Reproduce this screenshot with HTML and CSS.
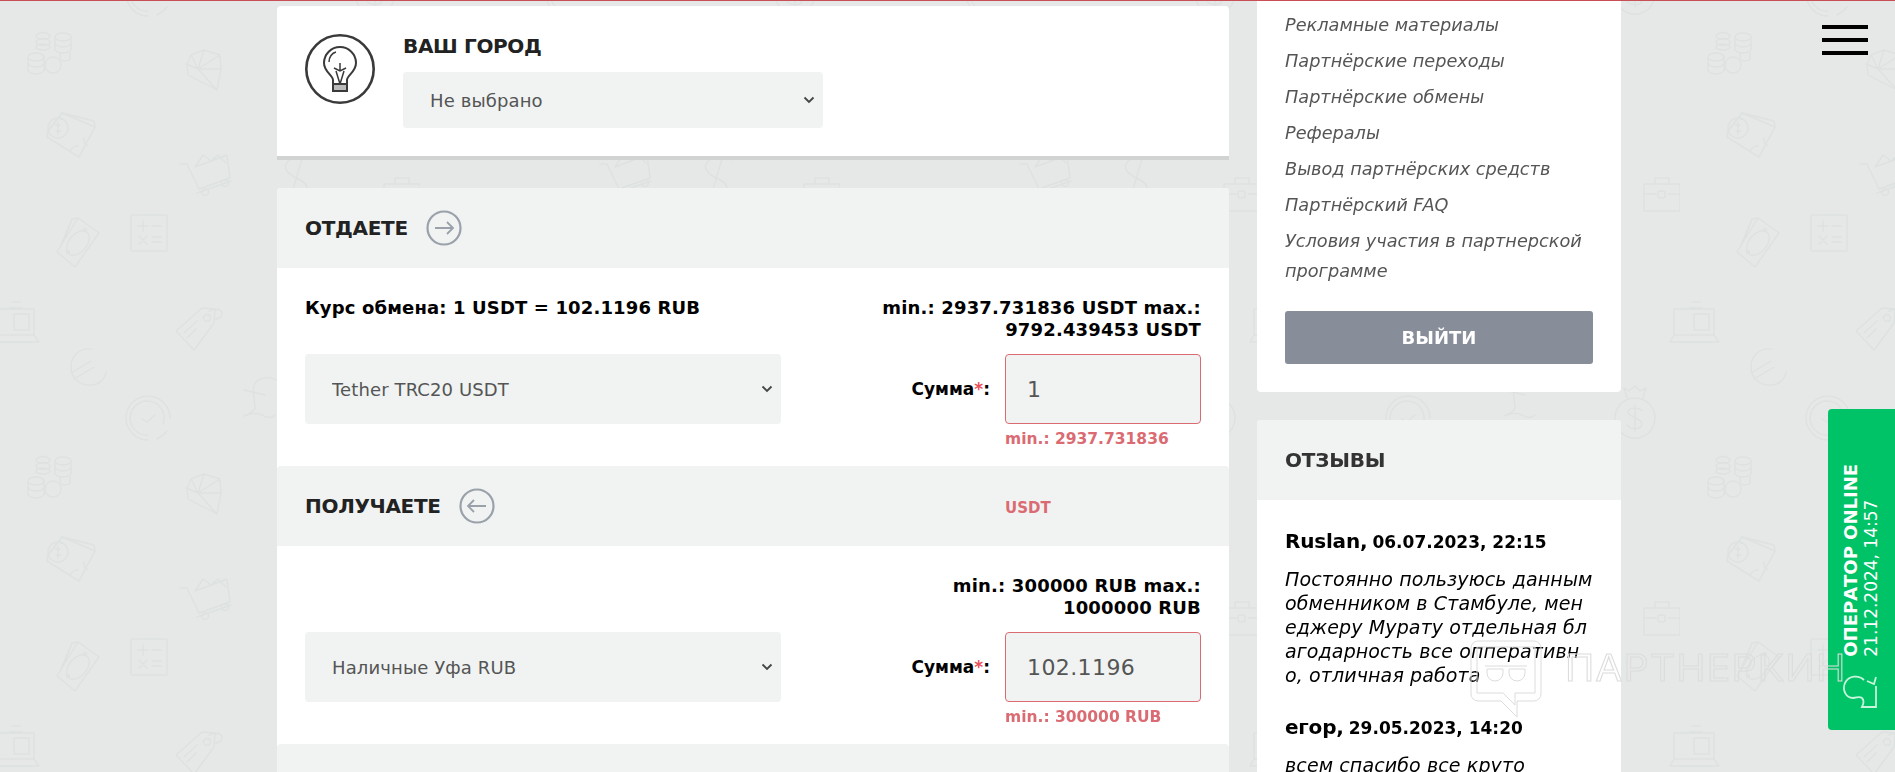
FILE: index.html
```html
<!DOCTYPE html>
<html lang="ru">
<head>
<meta charset="utf-8">
<title>Обмен</title>
<link rel="stylesheet" href="styles.css">
</head>
<body>
<svg class="pattern-bg" xmlns="http://www.w3.org/2000/svg" aria-hidden="true">
  <defs>
    <g id="coins">
      <ellipse cx="43" cy="36" rx="7" ry="3.5"/><ellipse cx="43" cy="42" rx="7" ry="3.5"/><ellipse cx="43" cy="47" rx="7" ry="3"/>
      <ellipse cx="63" cy="37" rx="8" ry="4"/><path d="M55 37v6c0 2 3 4 8 4s8-2 8-4v-6M55 43v6c0 2 3 4 8 4s8-2 8-4v-6M60 53v6c1 2 7 3 10 0v-6"/>
      <ellipse cx="36" cy="57" rx="8" ry="4"/><path d="M28 57v6c0 2 3 4 8 4s8-2 8-4v-6M28 63v7c0 2 3 4 8 4s8-2 8-4v-7"/>
      <circle cx="53" cy="65" r="8"/>
    </g>
    <g id="diamond">
      <path d="M191 55l13-5 16 5 1 14-4 21-29-15-1-11zM191 55l7 14 22-14M204 50l-6 19M186 64l12 5 23 0M198 69l19 21"/>
    </g>
    <g id="bill">
      <path d="M62 113l32 8 1 6-16 30-32-20 1-6z"/><path d="M48 131l14-18 33 14-16 30-32-20z"/><circle cx="58" cy="128" r="10"/>
      <path d="M58 122v12M55 125h5M56 131h5M84 138a8 8 0 0 0 4 8M70 152a8 8 0 0 1 8-6"/>
    </g>
    <g id="cart">
      <path d="M180 164h7l12 25 31-11-3-23-32 12M195 167l8-12 8 6 7-6 8 8M197 193l34-12"/><circle cx="205" cy="192" r="3.5"/><circle cx="225" cy="183" r="3.5"/>
    </g>
    <g id="dollar">
      <path d="M312 160c-8-5-22-4-26 4-3 7 6 12 12 15 7 3 12 8 7 13-6 5-15 4-21-2M304 152l-14 48"/>
    </g>
    <g id="briefcase">
      <rect x="384" y="184" width="36" height="27" rx="1"/><path d="M395 184v-6h14v6M384 194h12M408 194h12"/><rect x="398" y="191" width="7" height="7" rx="2"/>
    </g>
    <g id="stack">
      <path d="M57 252l21-34 21 15-24 34zM60 247l12-28 6-1M64 240l8-21 6-1"/><ellipse cx="78" cy="243" rx="14" ry="9" transform="rotate(-50 78 243)"/><circle cx="85" cy="230" r="1.5"/><circle cx="68" cy="252" r="1.5"/>
    </g>
    <g id="calc">
      <rect x="131" y="215" width="36" height="36" rx="1"/><path d="M138 226h10M143 221v10M152 226h9M139 236l8 8M147 236l-8 8M152 237h9M152 242h9"/>
    </g>
    <g id="laptop">
      <path d="M-6 335v-26h40v26M-10 342l4-7h40l5 7zM10 308h12M12 302h8"/><rect x="14" y="314" width="15" height="16"/>
    </g>
    <g id="tag">
      <path d="M176 331l26-23 13 1-1 14-20 27zM184 333l13-12M187 338l9-9"/><circle cx="207" cy="318" r="3.5"/><path d="M209 311c4-3 11-2 13 1 1 4-2 7-7 7"/>
    </g>
    <g id="euro">
      <path d="M91 349c-12-1-20 7-20 18 0 11 9 19 20 18 8 0 14-6 15-13M71 373l20-12M74 379l20-12"/>
    </g>
    <g id="clock">
      <path d="M148 440c-12 0-22-10-22-22s10-22 22-22 22 10 22 22M167 431c-3 4-6 6-10 8"/><path d="M148 435a17 17 0 1 1 15-11"/><path d="M142 419l5 3 8-7"/>
    </g>
    <g id="pound">
      <path d="M276 380c-8-5-20-2-22 6-2 5 1 14 1 22-1 3-6 6-11 8 6-2 12-4 18-1 5 3 10 3 13 0M244 390l21 5"/>
    </g>
    <g id="moneybag">
      <circle cx="375" cy="418" r="20"/><path d="M367 398l-3-10 5 3 6-5 5 5 6-3-3 10M382 411c-3-4-13-4-14 1s14 6 14 12-12 6-15 1M375 405v26"/>
    </g>
    <pattern id="tile" width="420" height="424" patternUnits="userSpaceOnUse">
      <g class="pattern-icons">
        <use href="#coins"/><use href="#diamond"/><use href="#bill"/><use href="#cart"/><use href="#dollar"/>
        <use href="#briefcase"/><use href="#stack"/><use href="#calc"/><use href="#laptop"/><use href="#laptop" x="420"/>
        <use href="#tag"/><use href="#euro"/><use href="#clock"/><use href="#clock" y="-424"/><use href="#pound"/>
        <use href="#moneybag"/><use href="#moneybag" y="-424"/>
      </g>
    </pattern>
  </defs>
  <rect width="100%" height="100%" fill="url(#tile)"/>
</svg>

<div class="page">
  <main class="main-col">
    <section class="city-card">
      <svg class="bulb" viewBox="0 0 70 70" fill="none" stroke="#3a3a3a" aria-hidden="true">
        <circle cx="35" cy="35" r="33.7" stroke-width="2.6"/>
        <path stroke-width="2" d="M28 50v-4c0-5-9-8-9-17a16 16 0 0 1 32 0c0 9-9 12-9 17v4z"/>
        <path stroke-width="1.5" d="M24 28c0-5 3-9 7-10M35 29v7M29 34l6 3 6-3M31 37l4 13M39 37l-4 13"/>
        <path stroke-width="2" fill="#bbb" d="M28 50h14v7H28z"/>
      </svg>
      <div class="city-fields">
        <h2 class="city-title">ВАШ ГОРОД</h2>
        <select class="field-select city-select"><option>Не выбрано</option></select>
      </div>
    </section>

    <section class="exchange-card">
      <header class="section-head">
        <h2 class="section-title">ОТДАЕТЕ</h2>
        <svg class="dir-icon" viewBox="0 0 36 36" fill="none" stroke="#9aa1aa" aria-hidden="true"><circle cx="18" cy="18" r="16.5" stroke-width="2.2"/><path stroke-width="1.8" d="M9 18h18M21 12l6 6-6 6"/></svg>
      </header>
      <div class="section-body">
        <div class="rate-row">
          <div class="rate-text">Курс обмена: 1 USDT = 102.1196 RUB</div>
          <div class="limits">min.: 2937.731836 USDT max.: 9792.439453 USDT</div>
        </div>
        <div class="form-row">
          <select class="field-select"><option>Tether TRC20 USDT</option></select>
          <label class="sum-label">Сумма<span class="req">*</span>:</label>
          <input class="sum-input" type="text" value="1">
          <div class="field-error">min.: 2937.731836</div>
        </div>
      </div>

      <header class="section-head">
        <h2 class="section-title">ПОЛУЧАЕТЕ</h2>
        <svg class="dir-icon" viewBox="0 0 36 36" fill="none" stroke="#9aa1aa" aria-hidden="true"><circle cx="18" cy="18" r="16.5" stroke-width="2.2"/><path stroke-width="1.8" d="M27 18H9M15 12l-6 6 6 6"/></svg>
        <div class="head-note">USDT</div>
      </header>
      <div class="section-body">
        <div class="rate-row">
          <div class="rate-text"></div>
          <div class="limits">min.: 300000 RUB max.: 1000000 RUB</div>
        </div>
        <div class="form-row">
          <select class="field-select"><option>Наличные Уфа RUB</option></select>
          <label class="sum-label">Сумма<span class="req">*</span>:</label>
          <input class="sum-input" type="text" value="102.1196">
          <div class="field-error">min.: 300000 RUB</div>
        </div>
      </div>
      <header class="section-head"></header>
    </section>
  </main>

  <aside class="side-col">
    <nav class="side-card menu-card">
      <a class="menu-link">Рекламные материалы</a>
      <a class="menu-link">Партнёрские переходы</a>
      <a class="menu-link">Партнёрские обмены</a>
      <a class="menu-link">Рефералы</a>
      <a class="menu-link">Вывод партнёрских средств</a>
      <a class="menu-link">Партнёрский FAQ</a>
      <a class="menu-link">Условия участия в партнерской программе</a>
      <button class="logout" type="button">ВЫЙТИ</button>
    </nav>
    <section class="side-card reviews-card">
      <header class="reviews-head">ОТЗЫВЫ</header>
      <div class="reviews-body">
        <article class="review">
          <div class="review-meta"><b class="review-name">Ruslan,</b> <span class="review-date">06.07.2023, 22:15</span></div>
          <p class="review-text">Постоянно пользуюсь данным обменником в Стамбуле, менеджеру Мурату отдельная благодарность все опперативно, отличная работа</p>
        </article>
        <article class="review">
          <div class="review-meta"><b class="review-name">егор,</b> <span class="review-date">29.05.2023, 14:20</span></div>
          <p class="review-text">всем спасибо все круто</p>
        </article>
      </div>
    </section>
  </aside>
</div>

<div class="top-line"></div>
<div class="burger"><span></span><span></span><span></span></div>

<div class="watermark">
  <svg class="wm-icon" viewBox="0 0 72 78" fill="none" stroke="#dcdcdc" aria-hidden="true">
    <path d="M8 1h56a7 7 0 0 1 7 7v46a7 7 0 0 1-7 7H47v16L31 61H8a7 7 0 0 1-7-7V8a7 7 0 0 1 7-7z"/>
    <path d="M7 7h58v46H45v12L33 53H7z"/>
    <path d="M17 29h16v4a8 8 0 0 1-16 0zM39 29h16v4a8 8 0 0 1-16 0zM15 26h42"/>
  </svg>
  <span class="wm-text">ПАРТНЕРКИН</span>
</div>

<aside class="operator">
  <div class="operator-text">
    <div class="operator-title">ОПЕРАТОР ONLINE</div>
    <div class="operator-date">21.12.2024, 14:57</div>
  </div>
  <svg class="operator-icon" viewBox="0 0 34 34" fill="none" stroke="#c8f5dc" stroke-width="1.8" aria-hidden="true">
    <path d="M21 6C16 1 6 1 2 9c-3 7 1 15 8 15 4 0 6-2 9 0 3 3 1 7 0 9h14V12M24 7l7 3 2-7"/>
  </svg>
</aside>
</body>
</html>
```
FILE: styles.css
```css
* { box-sizing: border-box; }
html { background: #e5e8e7; }
html, body {
  margin: 0;
  height: 772px;
  overflow: hidden;
  font-family: "DejaVu Sans", Verdana, sans-serif;
  color: #000;
}
.pattern-bg { position: fixed; inset: 0; width: 100%; height: 100%; z-index: -1; }
.pattern-icons { fill: none; stroke: #dde1e0; stroke-width: 1.4; stroke-linejoin: round; stroke-linecap: round; }

.page { display: flex; align-items: flex-start; gap: 28px; padding-left: 277px; }
.main-col { width: 952px; padding-top: 6px; display: flex; flex-direction: column; gap: 28px; }
.side-col { width: 364px; display: flex; flex-direction: column; gap: 28px; }

.city-card {
  display: flex; gap: 28px; height: 154px; padding: 28px;
  background: #fff; border-bottom: 4px solid #d0d3d2; border-radius: 4px 4px 0 0;
}
.bulb { width: 70px; height: 70px; flex: none; }
.city-title { margin: 0 0 13px; font-size: 20px; line-height: 25px; font-weight: 700; color: #222; letter-spacing: -.35px; }
.field-select {
  appearance: none;
  height: 70px; width: 476px; border: 0; border-radius: 4px; padding: 1px 27px 0;
  background: #f0f3f2 url("data:image/svg+xml,%3Csvg xmlns='http://www.w3.org/2000/svg' width='12' height='8' viewBox='0 0 12 8'%3E%3Cpath d='M1.5 1.5L6 6l4.500-4.500' fill='none' stroke='%23444' stroke-width='1.800'/%3E%3C/svg%3E") no-repeat right 8px center;
  color: #555; font: 18px "DejaVu Sans", sans-serif; letter-spacing: .12px;
}
.city-select { width: 420px; height: 56px; }

.exchange-card { background: #fff; border-radius: 4px; }
.section-head {
  display: flex; align-items: center; gap: 18px; height: 80px; padding: 0 28px;
  background: #f0f3f2; border-radius: 4px 4px 0 0;
}
.section-title { margin: 0; font-size: 20px; font-weight: 700; color: #222; letter-spacing: -.3px; }
.dir-icon { width: 36px; height: 36px; flex: none; }
.head-note { margin-left: auto; width: 196px; font-size: 15px; font-weight: 700; color: #db6b72; padding-top: 4px; }
.section-body { padding: 29px 28px 0; height: 198px; }
.rate-row { display: flex; justify-content: space-between; margin-bottom: 13px; }
.rate-text { font-size: 18px; line-height: 22px; font-weight: 700; letter-spacing: .14px; }
.limits { width: 330px; text-align: right; font-size: 18px; line-height: 22px; font-weight: 700; letter-spacing: .17px; }
.form-row { display: grid; grid-template-columns: 476px 1fr 196px; align-items: center; }
.sum-label { text-align: right; padding-right: 15px; font-size: 17px; font-weight: 700; }
.req { color: #e8505b; }
.sum-input {
  width: 196px; height: 70px; padding: 0 21px; border: 1px solid #db6b72; border-radius: 4px;
  background: #f0f3f2; color: #555; font: 22px "DejaVu Sans", sans-serif; letter-spacing: .4px;
}
.field-error { grid-column: 3; margin-top: 4px; font-size: 15.500px; line-height: 22px; font-weight: 700; color: #db6b72; }

.side-card { background: #fff; border-radius: 0 0 4px 4px; }
.menu-card { display: flex; flex-direction: column; gap: 6px; padding: 10px 28px 28px; }
.menu-link { font-size: 17.700px; line-height: 30px; font-style: italic; color: #555; }
.logout {
  height: 53px; margin-top: 19px; border: 0; border-radius: 3px; background: #878e99;
  color: #fff; font: 700 18px "DejaVu Sans", sans-serif;
}
.reviews-card { border-radius: 4px 4px 0 0; }
.reviews-head {
  display: flex; align-items: center; height: 80px; padding: 0 28px; background: #f0f3f2;
  border-radius: 4px 4px 0 0; font-size: 20px; font-weight: 700; color: #333; letter-spacing: -.2px;
}
.reviews-body { padding: 28px 28px 0; }
.review { margin-bottom: 27px; }
.review-meta { line-height: 26px; }
.review-name { font-size: 20px; letter-spacing: -.2px; }
.review-date { font-size: 17px; font-weight: 700; }
.review-text { margin: 11px 0 0; font-size: 19px; line-height: 24px; font-style: italic; letter-spacing: .12px; word-break: break-all; }

.top-line { position: fixed; top: 0; left: 0; right: 0; height: 1px; background: #c84f55; }
.burger { position: fixed; top: 25px; right: 27px; width: 46px; display: flex; flex-direction: column; gap: 9px; }
.burger span { display: block; height: 4px; background: #000; }

.watermark { position: fixed; left: 1470px; top: 640px; display: flex; gap: 23px; z-index: 3; pointer-events: none; }
.wm-icon { width: 72px; height: 78px; flex: none; }
.wm-text {
  margin-top: 9px; font: 37px/37px Inter, sans-serif; letter-spacing: 1px; color: transparent;
  -webkit-text-stroke: 1px #dcdcdc; white-space: nowrap; transform: scaleX(1.065); transform-origin: left center;
}

.operator {
  position: fixed; right: 0; top: 409px; width: 67px; height: 321px; z-index: 2;
  display: flex; flex-direction: column; justify-content: flex-end; align-items: flex-start;
  gap: 17px; padding: 0 0 22px 12px; background: #00c267; border-radius: 4px 0 0 4px; color: #fff;
}
.operator-text { writing-mode: vertical-rl; transform: rotate(180deg); }
.operator-title { font-size: 18px; line-height: 22px; font-weight: 700; }
.operator-date { font-size: 17px; line-height: 19px; }
.operator-icon { width: 34px; height: 34px; flex: none; margin-left: 3px; }
```
